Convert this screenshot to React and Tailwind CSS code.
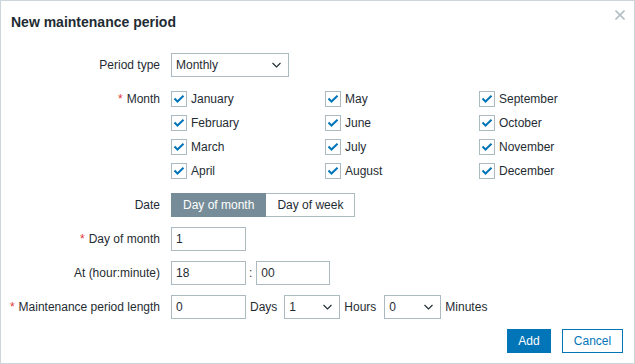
import React from "react";

const font = { fontFamily: '"Liberation Sans", Arial, sans-serif' };

function Chevron() {
  return (
    <svg width="9" height="6" viewBox="0 0 9 6" className="shrink-0">
      <polyline points="0.5,1 4.5,5 8.5,1" fill="none" stroke="#1f2c33" strokeWidth="1.1" />
    </svg>
  );
}

function Select({ value, w }) {
  return (
    <div className={`${w} h-[24px] border border-[#acbbc2] bg-white flex items-center justify-between pl-[4px] pr-[7px] text-[12px] text-[#1f2c33]`}>
      <span>{value}</span>
      <Chevron />
    </div>
  );
}

function Input({ value, w = "w-[75px]" }) {
  return (
    <div className={`${w} h-[24px] border border-[#acbbc2] bg-white flex items-center pl-[4px] text-[12px] text-[#1f2c33]`}>
      {value}
    </div>
  );
}

function Check({ label }) {
  return (
    <div className="h-[24px] flex items-center">
      <div className="w-[16px] h-[16px] border border-[#acbbc2] bg-white flex items-center justify-center shrink-0">
        <svg width="12" height="10" viewBox="0 0 12 10">
          <polyline points="1.5,4.5 4.5,7.5 10.5,1.8" fill="none" stroke="#0275b8" strokeWidth="2" />
        </svg>
      </div>
      <span className="ml-[4px] text-[12px] text-[#1f2c33]">{label}</span>
    </div>
  );
}

function Label({ children, req }) {
  return (
    <div className="h-[24px] flex items-center justify-end text-[12px] text-[#1f2c33] self-start whitespace-nowrap">
      {req && <span className="text-[#e33734] mr-[4px]">*</span>}
      {children}
    </div>
  );
}

const months = [
  "January", "February", "March", "April",
  "May", "June", "July", "August",
  "September", "October", "November", "December",
];

export default function App() {
  return (
    <div style={font} className="w-[635px] h-[364px] border border-[#ccd5d9] bg-white flex flex-col">
      <div className="h-[42px] flex items-start justify-between pl-[10px] pr-[9px]">
        <div className="mt-[13px] leading-[16px] text-[14px] font-bold text-[#1f2c33]">New maintenance period</div>
        <svg width="10" height="10" viewBox="0 0 10 10" className="mt-[9px]">
          <path d="M0.5 0.5 L9.5 9.5 M9.5 0.5 L0.5 9.5" stroke="#b4bfc5" strokeWidth="1.6" />
        </svg>
      </div>
      <div className="mt-[10px] grid grid-cols-[159px_auto] gap-x-[11px] gap-y-[10px] justify-start">
        <Label>Period type</Label>
        <Select value="Monthly" w="w-[118px]" />

        <Label req>Month</Label>
        <div className="grid grid-rows-4 grid-flow-col grid-cols-[154px_154px_154px]">
          {months.map((m) => (
            <Check key={m} label={m} />
          ))}
        </div>

        <Label>Date</Label>
        <div className="flex h-[24px] text-[12px]">
          <div className="h-[24px] px-[11px] flex items-center bg-[#768d99] border border-[#768d99] text-white">Day of month</div>
          <div className="h-[24px] px-[11px] flex items-center bg-white border border-l-0 border-[#acbbc2] text-[#1f2c33]">Day of week</div>
        </div>

        <Label req>Day of month</Label>
        <Input value="1" />

        <Label>At (hour:minute)</Label>
        <div className="flex items-center text-[12px] text-[#1f2c33]">
          <Input value="18" />
          <span className="ml-[3px] mr-[4px]">:</span>
          <Input value="00" w="w-[74px]" />
        </div>

        <Label req>Maintenance period length</Label>
        <div className="flex items-center text-[12px] text-[#1f2c33]">
          <Input value="0" />
          <span className="ml-[4px] mr-[7px]">Days</span>
          <Select value="1" w="w-[56px]" />
          <span className="ml-[4px] mr-[8px]">Hours</span>
          <Select value="0" w="w-[57px]" />
          <span className="ml-[4px]">Minutes</span>
        </div>
      </div>
      <div className="mt-[10px] flex justify-end gap-[11px] pr-[11px]">
        <div className="w-[44px] h-[24px] flex items-center justify-center bg-[#0275b8] border border-[#0275b8] text-white text-[12px]">Add</div>
        <div className="w-[61px] h-[24px] flex items-center justify-center bg-white border border-[#0275b8] text-[#0275b8] text-[12px]">Cancel</div>
      </div>
    </div>
  );
}
